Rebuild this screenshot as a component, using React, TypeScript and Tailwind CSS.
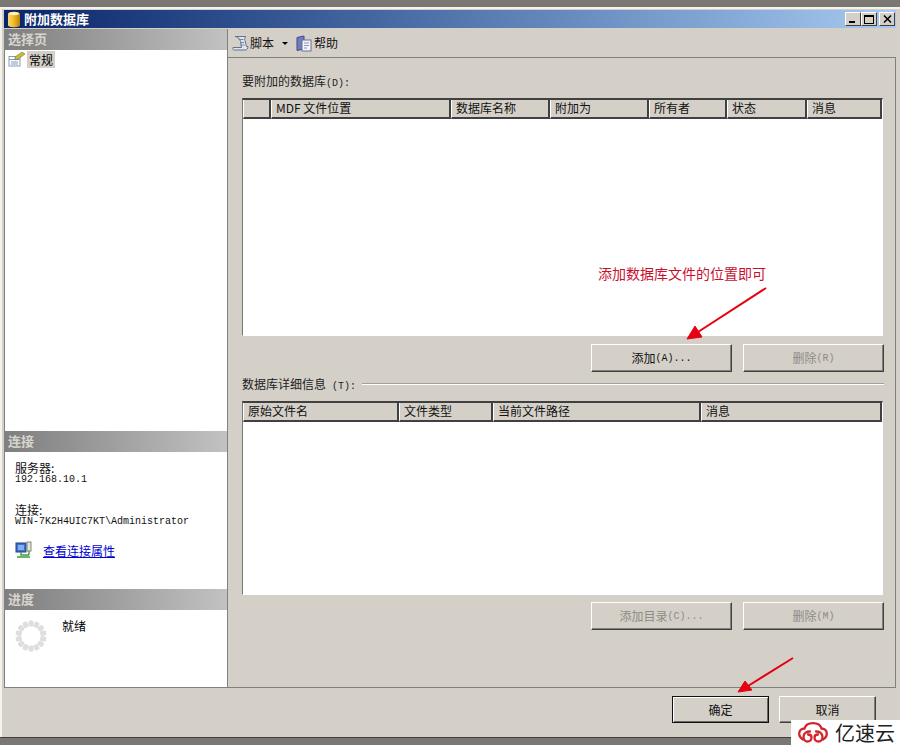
import React from 'react';

const cjk = { fontFamily: '"Noto Sans CJK SC", sans-serif' };

const attachColumns = [
  { label: '', width: 'w-[28px]' },
  { label: 'MDF 文件位置', width: 'w-[180px]' },
  { label: '数据库名称', width: 'w-[99px]' },
  { label: '附加为', width: 'w-[99px]' },
  { label: '所有者', width: 'w-[78px]' },
  { label: '状态', width: 'w-[80px]' },
  { label: '消息', width: 'flex-1' },
];

const detailColumns = [
  { label: '原始文件名', width: 'w-[156px]' },
  { label: '文件类型', width: 'w-[94px]' },
  { label: '当前文件路径', width: 'w-[208px]' },
  { label: '消息', width: 'flex-1' },
];

function HeaderCell({ label, width }: { label: string; width: string }) {
  return (
    <div className={`${width} h-[19px] shrink-0 border-l border-r-2 border-b-2 border-l-white border-r-[#404040] border-b-[#404040] bg-[#d4d0c8] pl-[4px] text-[12px] leading-[16px] text-[#111] overflow-hidden`}>
      {label}
    </div>
  );
}

function GridTable({ columns, height }: { columns: { label: string; width: string }[]; height: string }) {
  return (
    <div className={`${height} mr-px flex flex-col border-t-2 border-l border-t-[#404040] border-l-[#777] border-r border-b border-r-white border-b-white bg-white`}>
      <div className="flex">
        {columns.map((c) => (
          <HeaderCell key={c.label || 'blank'} {...c} />
        ))}
      </div>
    </div>
  );
}

function RaisedButton({ children, disabled, width = 'w-[141px]', height = 'h-[28px]', strong }: { children: React.ReactNode; disabled?: boolean; width?: string; height?: string; strong?: boolean }) {
  return (
    <button
      className={`${width} ${height} flex items-center justify-center border ${strong ? 'border-[#111] shadow-[inset_1px_1px_0_#fff,inset_-1px_-1px_0_#6a6a65]' : 'border-t-white border-l-white border-r-[#404040] border-b-[#404040] shadow-[inset_-1px_-1px_0_#808080]'} bg-[#d4d0c8] text-[12px] ${disabled ? 'text-[#8d8b85]' : 'text-[#111]'}`}
    >
      {children}
    </button>
  );
}

function SectionHeader({ children }: { children: React.ReactNode }) {
  return (
    <div className="h-[21px] shrink-0 bg-gradient-to-r from-[#7f7f7f] to-[#c2c2c2] pl-[3px] text-[13px] font-bold leading-[19px] text-[#d8d5ce]">
      {children}
    </div>
  );
}

function Spinner() {
  const dots = Array.from({ length: 14 }, (_, i) => (i * 360) / 14);
  return (
    <svg width="32" height="32" viewBox="0 0 32 32">
      {dots.map((a) => (
        <rect key={a} x="13.500" y="0.500" width="5" height="6" rx="1.500" fill="#dedede" transform={`rotate(${a} 16 16)`} />
      ))}
    </svg>
  );
}

function DbIcon() {
  return (
    <svg width="12" height="17" viewBox="0 0 12 17">
      <defs>
        <linearGradient id="db" x1="0" x2="1" y1="0" y2="0">
          <stop offset="0" stopColor="#f7d978" />
          <stop offset="0.5" stopColor="#f2b820" />
          <stop offset="1" stopColor="#b77f10" />
        </linearGradient>
      </defs>
      <path d="M0 3 C0 0 12 0 12 3 V14 C12 17 0 17 0 14Z" fill="url(#db)" />
      <ellipse cx="6" cy="2.600" rx="5" ry="1.600" fill="#fff2c0" />
    </svg>
  );
}

function ScriptIcon() {
  return (
    <svg width="17" height="17" viewBox="0 0 17 17">
      <path d="M3 1.500h11c-1.500 1-1.500 2.500-1 4l1.500 6H16c0 2-1 3.500-3 3.500H2.500C1 15.500 0.500 14 1 12.500h8.500l-1-6C8 4 6 1.500 3 1.500Z" fill="#dde4ee" stroke="#62738e" strokeWidth="1" />
      <path d="M6.500 4.500h5M8 7.500h4M8.500 10h4" stroke="#7286a3" strokeWidth="1" />
    </svg>
  );
}

function HelpIcon() {
  return (
    <svg width="16" height="17" viewBox="0 0 16 17">
      <path d="M1 2.500L8 1v13l-7 1.500Z" fill="#6f7dbd" stroke="#3f4a8a" />
      <rect x="6" y="5" width="9" height="11" fill="#f4f4f8" stroke="#6a6f99" />
      <path d="M8 8h5M8 10.500h5M8 13h3" stroke="#8f95bb" />
    </svg>
  );
}

function GeneralIcon() {
  return (
    <svg width="17" height="16" viewBox="0 0 17 16">
      <rect x="1" y="5.500" width="11" height="9.500" fill="#fff" stroke="#8a9bb5" />
      <path d="M1 8.500h11M3 11h7M3 13h7" stroke="#7f9ac4" />
      <path d="M7 6l7-5 3 2-7 5-3 1Z" fill="#c9bb3c" stroke="#7c7526" strokeWidth="0.600" />
    </svg>
  );
}

function ConnectionIcon() {
  return (
    <svg width="17" height="18" viewBox="0 0 17 18">
      <rect x="1" y="2" width="10" height="9" fill="#3c6fd0" stroke="#24407f" />
      <rect x="3" y="4" width="6" height="5" fill="#7fb0f0" />
      <rect x="12" y="1" width="4" height="9" fill="#dfe3d8" stroke="#808878" />
      <path d="M6 11v3h8M2 16h13M14 10v4" stroke="#3f9a3f" strokeWidth="1.400" fill="none" />
    </svg>
  );
}

function WindowButton({ children }: { children: React.ReactNode }) {
  return (
    <div className="flex h-[14px] w-[16px] items-center justify-center border border-t-white border-l-white border-r-[#404040] border-b-[#404040] bg-[#d4d0c8]">
      {children}
    </div>
  );
}

function CloudLogo() {
  return (
    <svg width="30" height="21" viewBox="0 0 30 21" fill="none" stroke="#d2232a" strokeWidth="2.300" strokeLinecap="round">
      <path d="M5 17.500C2.500 16 1.200 14 1.200 11.500C1.200 8.500 3.500 6.500 6.500 6.500C7.500 3 10.500 1.200 15 1.200S22.500 3 23.500 6.500C26.500 6.500 28.800 8.500 28.800 11.500C28.800 14 27.500 16 25 17.500" />
      <path d="M12 9.500C9 9.500 5.500 11 5.500 15C5.500 17.500 7.300 19.500 9.500 19.500S13.500 17.800 13.500 15.500S12 12.500 10 12.500" />
      <path d="M18 9.500C21 9.500 24.500 11 24.500 15C24.500 17.500 22.700 19.500 20.500 19.500S16.500 17.800 16.500 15.500S18 12.500 20 12.500" />
    </svg>
  );
}

export default function App() {
  return (
    <div className="relative flex h-[745px] w-[900px] flex-col overflow-hidden bg-[#d4d0c8]" style={cjk}>
      <div className="h-[7px] shrink-0 bg-[#7b7873]" />
      <div className="flex min-h-0 flex-1 flex-col border-t-2 border-l-2 border-t-[#f4f2ec] border-l-[#f4f2ec] pl-[2px] pr-[4px] pt-px">
        {/* title bar */}
        <div className="flex h-[18px] shrink-0 items-center bg-gradient-to-r from-[#0a246a] to-[#a6caf0] pl-[4px] pr-[1px]">
          <DbIcon />
          <span className="ml-[4px] flex-1 text-[13px] font-bold leading-[18px] text-white">附加数据库</span>
          <WindowButton>
            <div className="mt-[6px] mr-[3px] h-[2px] w-[6px] bg-black" />
          </WindowButton>
          <WindowButton>
            <div className="h-[9px] w-[10px] border border-t-2 border-black" />
          </WindowButton>
          <div className="ml-[2px]">
            <WindowButton>
              <svg width="9" height="8" viewBox="0 0 9 8" stroke="#000" strokeWidth="1.500">
                <path d="M1 0.500l7 7M8 0.500l-7 7" />
              </svg>
            </WindowButton>
          </div>
        </div>

        <div className="mt-px flex min-h-0 flex-1">
          {/* left pane */}
          <div className="flex h-[659px] w-[224px] shrink-0 flex-col border-x border-b border-[#808080] bg-white">
            <SectionHeader>选择页</SectionHeader>
            <div className="flex flex-1 items-start pl-[3px] pt-px">
              <GeneralIcon />
              <span className="ml-[2px] bg-[#d4d0c8] px-[2px] text-[12px] leading-[17px] text-black">常规</span>
            </div>
            <SectionHeader>连接</SectionHeader>
            <div className="h-[137px] shrink-0 pl-[10px] pt-[10px]">
              <div className="text-[12px] leading-[12px] text-[#111]">服务器:</div>
              <div className="font-['Liberation_Mono'] text-[10px] leading-[12px] text-[#111]">192.168.10.1</div>
              <div className="mt-[18px] text-[12px] leading-[12px] text-[#111]">连接:</div>
              <div className="font-['Liberation_Mono'] text-[10px] leading-[12px] text-[#111]">WIN-7K2H4UIC7KT\Administrator</div>
              <div className="mt-[13px] flex h-[18px] items-center">
                <ConnectionIcon />
                <a className="ml-[11px] text-[12px] leading-[15px] text-[#0000d0] underline">查看连接属性</a>
              </div>
            </div>
            <SectionHeader>进度</SectionHeader>
            <div className="flex h-[77px] shrink-0 pl-[10px] pt-[8px]">
              <div className="pt-[2px]">
                <Spinner />
              </div>
              <span className="ml-[15px] text-[12px] leading-[15px] text-black">就绪</span>
            </div>
          </div>

          {/* right pane */}
          <div className="flex h-[659px] min-w-0 flex-1 flex-col">
            <div className="flex h-[28px] shrink-0 items-center pl-[4px] text-[12px] text-[#111]">
              <ScriptIcon />
              <span className="ml-px">脚本</span>
              <span className="ml-[8px] mr-[8px] h-0 w-0 border-x-[3px] border-t-[3px] border-x-transparent border-t-black" />
              <HelpIcon />
              <span className="ml-[2px]">帮助</span>
            </div>
            <div className="flex min-h-0 flex-1 flex-col border border-l-0 border-[#808080] pl-[14px] pr-[11px]">
              <div className="mt-[14px] h-[18px] text-[12px] leading-[18px] text-[#222]">
                要附加的数据库<span className="font-['Liberation_Mono'] text-[10px]">(D):</span>
              </div>
              <div className="mt-[8px]">
                <GridTable columns={attachColumns} height="h-[238px]" />
              </div>
              <div className="mt-[8px] flex justify-end gap-[11px]">
                <RaisedButton>
                  添加<span className="font-['Liberation_Mono'] text-[10px]">(A)...</span>
                </RaisedButton>
                <RaisedButton disabled>
                  删除<span className="font-['Liberation_Mono'] text-[10px]">(R)</span>
                </RaisedButton>
              </div>
              <div className="mt-[3px] flex h-[18px] items-center text-[12px] text-[#222]">
                <span>
                  数据库详细信息<span className="font-['Liberation_Mono'] text-[10px]"> (T):</span>
                </span>
                <div className="ml-[6px] flex-1 border-t border-b border-t-[#a0a0a0] border-b-white" />
              </div>
              <div className="mt-[8px]">
                <GridTable columns={detailColumns} height="h-[194px]" />
              </div>
              <div className="mt-[7px] flex justify-end gap-[11px]">
                <RaisedButton disabled>
                  添加目录<span className="font-['Liberation_Mono'] text-[10px]">(C)...</span>
                </RaisedButton>
                <RaisedButton disabled>
                  删除<span className="font-['Liberation_Mono'] text-[10px]">(M)</span>
                </RaisedButton>
              </div>
            </div>
          </div>
        </div>

        {/* footer */}
        <div className="flex h-[50px] shrink-0 justify-end gap-[10px] pr-[20px] pt-[9px]">
          <RaisedButton width="w-[97px]" height="h-[27px]" strong>确定</RaisedButton>
          <RaisedButton width="w-[97px]" height="h-[27px]">取消</RaisedButton>
        </div>
      </div>
      <div className="h-[8px] shrink-0 border-t border-[#404040] bg-[#7b7873]" />

      {/* annotations */}
      <div className="absolute left-[598px] top-[264px] text-[14px] leading-[18px] text-[#c8102e]">添加数据库文件的位置即可</div>
      <svg className="absolute left-0 top-0" width="900" height="745" fill="#e60012" stroke="#e60012">
        <path d="M766 288L698 332" strokeWidth="2" />
        <path d="M687 339L695 326L702 337Z" />
        <path d="M793 658L748 686" strokeWidth="2" />
        <path d="M738 692L745 681L752 690Z" />
      </svg>

      {/* watermark */}
      <div className="absolute bottom-0 right-0 flex h-[25px] w-[109px] items-center bg-white pl-[7px]">
        <CloudLogo />
        <span className="ml-[7px] whitespace-nowrap text-[20px] leading-[24px] text-[#222]">亿速云</span>
      </div>
    </div>
  );
}
